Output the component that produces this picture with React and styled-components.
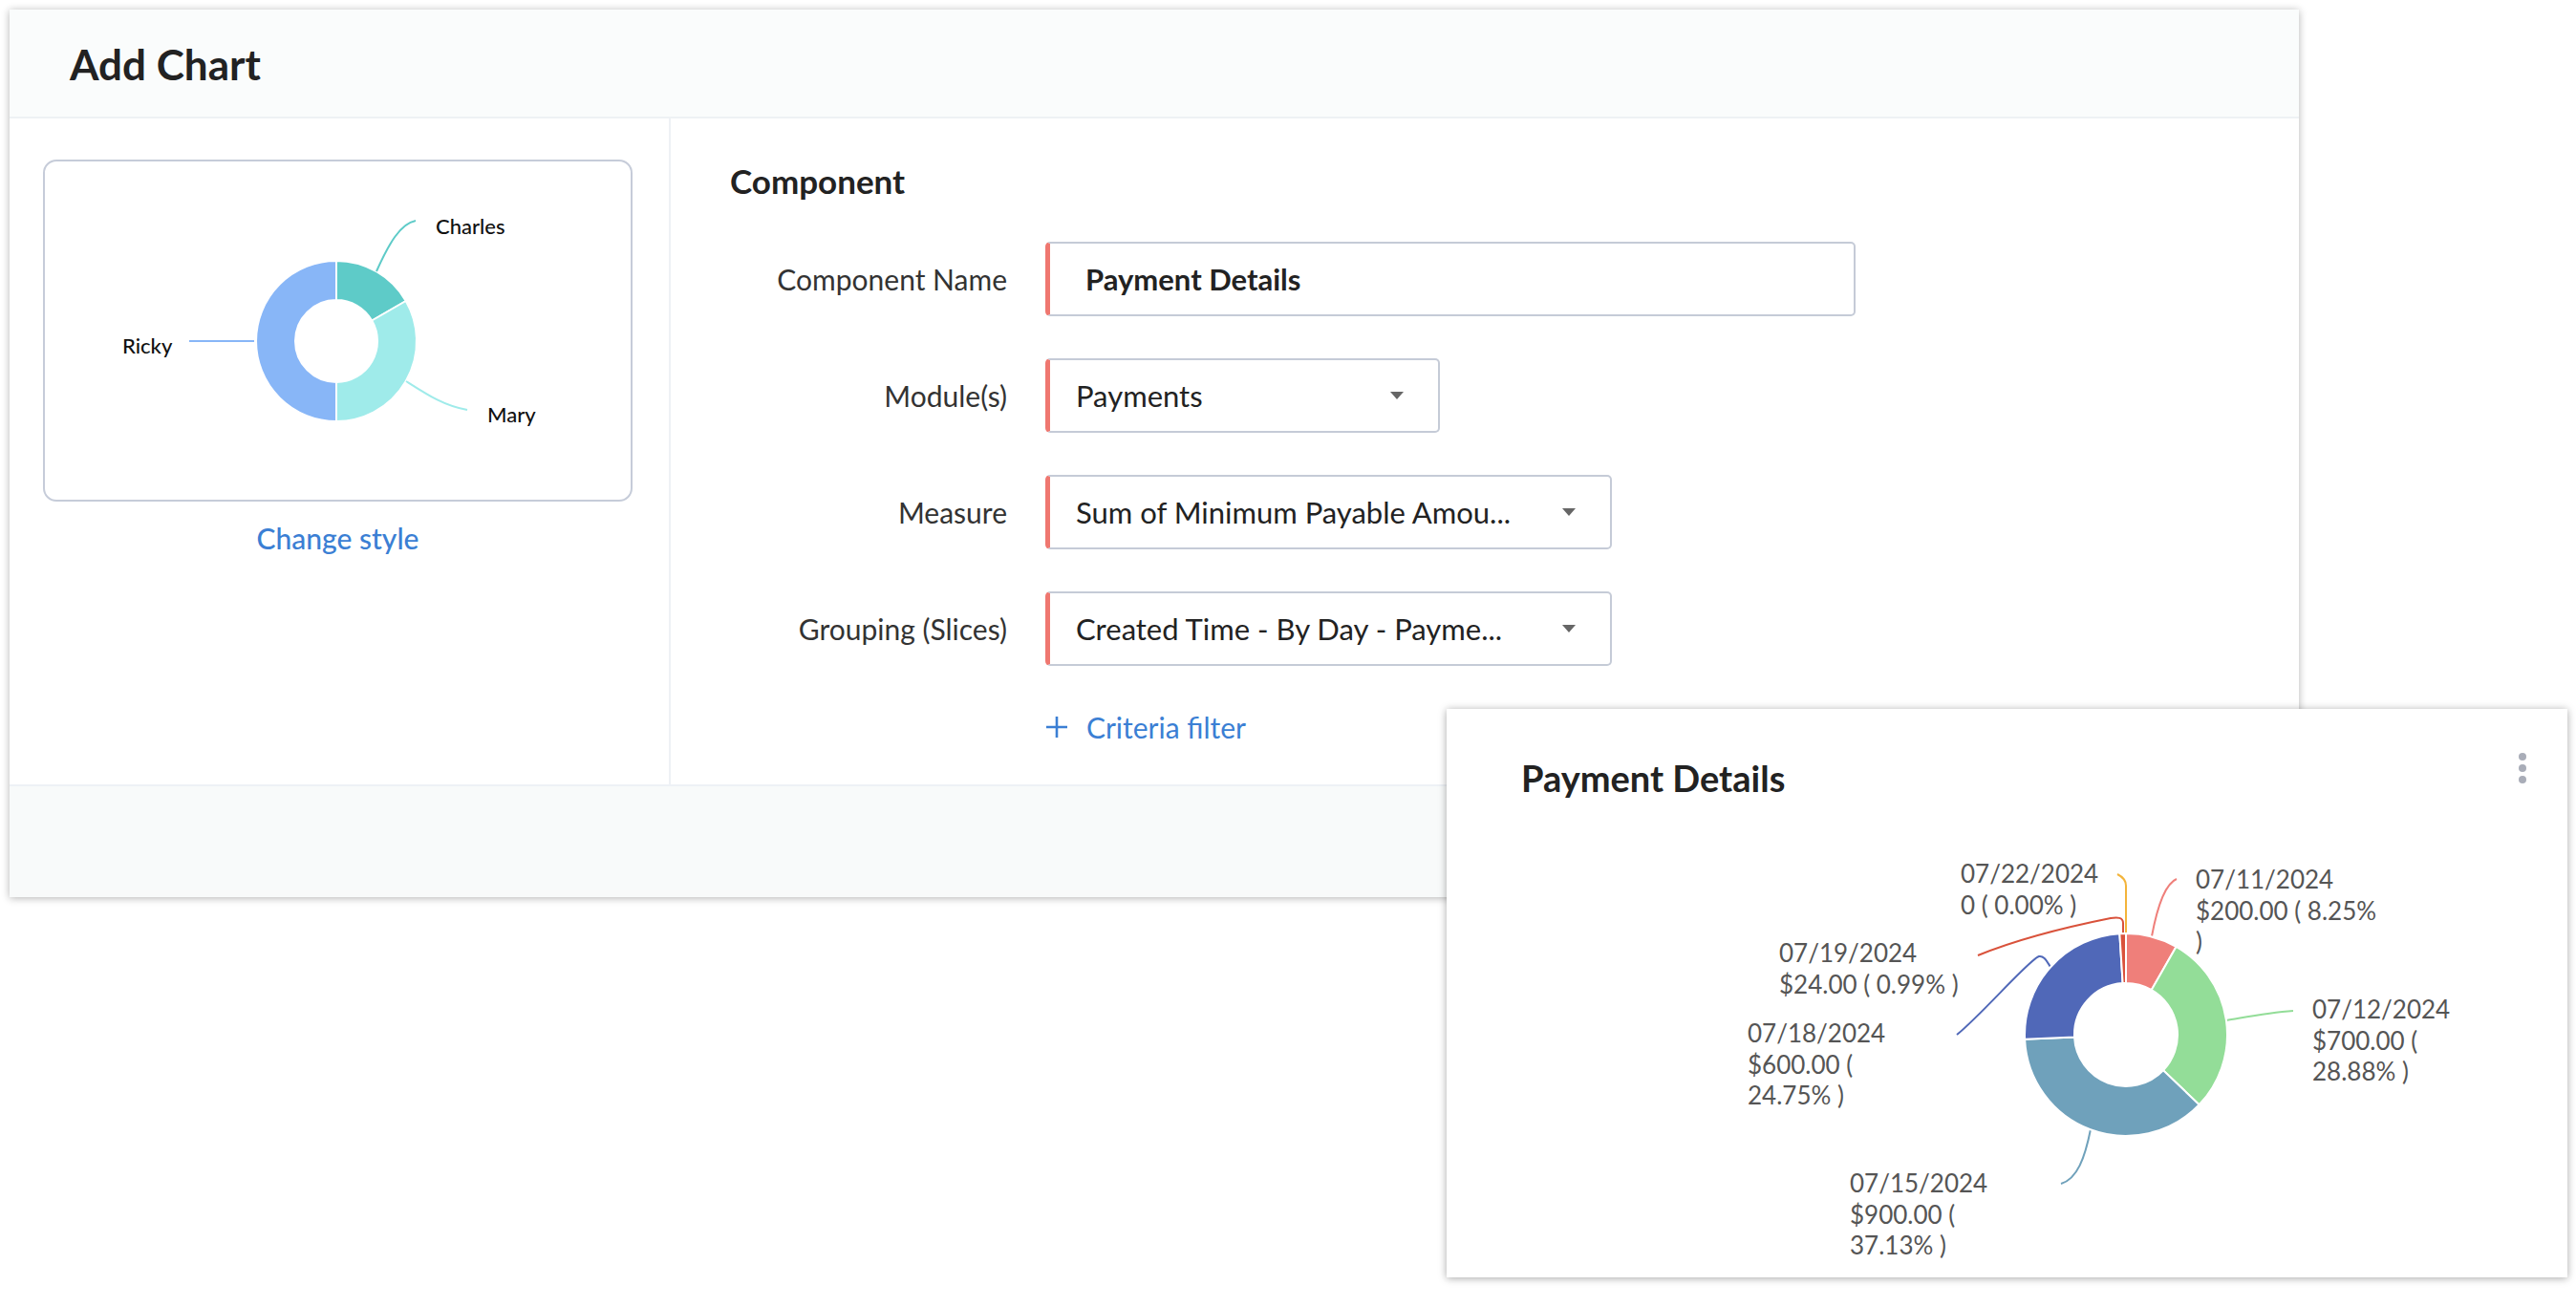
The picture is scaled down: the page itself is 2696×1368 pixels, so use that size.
import React from "react";
import styled, { createGlobalStyle } from "styled-components";

const GlobalStyle = createGlobalStyle`
  body {
    margin: 0;
    background: #ffffff;
    font-family: Lato, "Open Sans", sans-serif;
  }
`;

// angle in degrees, clockwise from 12 o'clock
const pt = (cx, cy, rad, deg) => {
  const a = (deg * Math.PI) / 180;
  return [cx + rad * Math.sin(a), cy - rad * Math.cos(a)];
};

const slicePath = (cx, cy, R, r, a0, a1) => {
  const large = a1 - a0 > 180 ? 1 : 0;
  const [x0, y0] = pt(cx, cy, R, a0);
  const [x1, y1] = pt(cx, cy, R, a1);
  const [x2, y2] = pt(cx, cy, r, a1);
  const [x3, y3] = pt(cx, cy, r, a0);
  return `M${x0} ${y0} A${R} ${R} 0 ${large} 1 ${x1} ${y1} L${x2} ${y2} A${r} ${r} 0 ${large} 0 ${x3} ${y3} Z`;
};

const previewSlices = [
  { name: "Charles", from: 0, to: 60, color: "#5ecbc8" },
  { name: "Mary", from: 60, to: 180, color: "#9febea" },
  { name: "Ricky", from: 180, to: 360, color: "#88b6f7" },
];

const previewLabels = [
  { text: "Charles", x: 411, y: 78, line: "M349 117 C362 88, 374 67, 390 64", color: "#5ecbc8" },
  { text: "Ricky", x: 83, y: 203, line: "M153 190 L221 190", color: "#88b6f7" },
  { text: "Mary", x: 465, y: 275, line: "M380 232 C402 246, 420 258, 444 262", color: "#9febea" },
];

const payments = [
  { from: 0, to: 29.7, color: "#ef7f7a" },
  { from: 29.7, to: 133.7, color: "#93dd98" },
  { from: 133.7, to: 267.4, color: "#6fa1bb" },
  { from: 267.4, to: 356.4, color: "#5068b8" },
  { from: 356.4, to: 360, color: "#d9523b" },
];

const paymentLabels = [
  { x: 538, y: 182, lines: ["07/22/2024", "0 ( 0.00% )"] },
  { x: 784, y: 188, lines: ["07/11/2024", "$200.00 ( 8.25%", ")"] },
  { x: 348, y: 265, lines: ["07/19/2024", "$24.00 ( 0.99% )"] },
  { x: 906, y: 324, lines: ["07/12/2024", "$700.00 (", "28.88% )"] },
  { x: 315, y: 349, lines: ["07/18/2024", "$600.00 (", "24.75% )"] },
  { x: 422, y: 506, lines: ["07/15/2024", "$900.00 (", "37.13% )"] },
];

const paymentLeaders = [
  { d: "M738 238 C744 206, 752 183, 764 178", color: "#ef7f7a" },
  { d: "M816 326 C840 322, 860 318, 886 316", color: "#93dd98" },
  { d: "M674 440 C668 470, 660 492, 643 497", color: "#6fa1bb" },
  { d: "M632 270 C628 264, 625 258, 620 259 C610 262, 560 320, 534 341", color: "#5068b8" },
  { d: "M708 235 L708 224 C708 218, 702 218, 695 219 C650 228, 600 240, 556 258", color: "#d9523b" },
  { d: "M711 235 L711 185 C711 178, 706 175, 702 173", color: "#f3b43b" },
];

const fields = [
  { label: "Component Name", value: "Payment Details", width: 848, input: true },
  { label: "Module(s)", value: "Payments", width: 413 },
  { label: "Measure", value: "Sum of Minimum Payable Amou...", width: 593 },
  { label: "Grouping (Slices)", value: "Created Time - By Day - Payme...", width: 593 },
];

const App = () => {
  return (
    <Page>
      <GlobalStyle />
      <Dialog>
        <Header>
          <Title>Add Chart</Title>
        </Header>
        <Body>
          <LeftCol>
            <PreviewBox>
              <svg width="100%" height="100%" viewBox="2 2 613 354">
                {previewSlices.map((s) => (
                  <path
                    key={s.name}
                    d={slicePath(307, 190, 84, 43, s.from, s.to)}
                    fill={s.color}
                    stroke="#fff"
                    strokeWidth="2"
                  />
                ))}
                {previewLabels.map((l) => (
                  <g key={l.text}>
                    <path d={l.line} fill="none" stroke={l.color} strokeWidth="2" />
                    <PreviewLabel x={l.x} y={l.y}>
                      {l.text}
                    </PreviewLabel>
                  </g>
                ))}
              </svg>
            </PreviewBox>
            <ChangeStyle>Change style</ChangeStyle>
          </LeftCol>
          <RightCol>
            <SectionTitle>Component</SectionTitle>
            <FormGrid>
              {fields.map((f) => (
                <React.Fragment key={f.label}>
                  <FieldLabel>{f.label}</FieldLabel>
                  <Field $width={f.width} $input={f.input}>
                    <FieldValue $bold={f.input}>{f.value}</FieldValue>
                    {!f.input && <Caret />}
                  </Field>
                </React.Fragment>
              ))}
              <CriteriaLink>
                <svg width="24" height="24" viewBox="0 0 24 24">
                  <path d="M12 1 V23 M1 12 H23" stroke="#3b7fd4" strokeWidth="2.6" fill="none" />
                </svg>
                Criteria filter
              </CriteriaLink>
            </FormGrid>
          </RightCol>
        </Body>
        <Footer />
      </Dialog>

      <ChartCard>
        <CardHeader>
          <CardTitle>Payment Details</CardTitle>
          <Kebab>
            <span />
            <span />
            <span />
          </Kebab>
        </CardHeader>
        <svg width="1173" height="475" viewBox="0 120 1173 475">
          {paymentLeaders.map((l, i) => (
            <path key={i} d={l.d} fill="none" stroke={l.color} strokeWidth="2" />
          ))}
          {payments.map((s, i) => (
            <path
              key={i}
              d={slicePath(711, 341, 106, 54, s.from, s.to)}
              fill={s.color}
              stroke="#fff"
              strokeWidth="2"
            />
          ))}
          {paymentLabels.map((l) => (
            <ChartLabel key={l.lines[0]} x={l.x} y={l.y}>
              {l.lines.map((t, i) => (
                <tspan key={i} x={l.x} dy={i === 0 ? 0 : 32.5}>
                  {t}
                </tspan>
              ))}
            </ChartLabel>
          ))}
        </svg>
      </ChartCard>
    </Page>
  );
};

const Page = styled.div`
  position: relative;
  width: 2696px;
  height: 1368px;
  padding: 10px 0 0 10px;
  box-sizing: border-box;
  overflow: hidden;
`;

const Dialog = styled.div`
  width: 2396px;
  height: 929px;
  display: flex;
  flex-direction: column;
  background: #ffffff;
  box-shadow: 0 1px 8px rgba(0, 0, 0, 0.3);
`;

const Header = styled.div`
  flex: 0 0 114px;
  box-sizing: border-box;
  display: flex;
  align-items: center;
  padding: 3px 0 0 63px;
  background: #fafcfc;
  border-bottom: 2px solid #eef2f4;
`;

const Title = styled.h1`
  margin: 0;
  font-size: 44px;
  font-weight: 700;
  line-height: 1.2;
  color: #222;
`;

const Body = styled.div`
  flex: 1;
  display: flex;
`;

const LeftCol = styled.div`
  width: 692px;
  box-sizing: border-box;
  border-right: 2px solid #eef1f5;
  padding: 43px 0 0 35px;
`;

const PreviewBox = styled.div`
  width: 617px;
  height: 358px;
  box-sizing: border-box;
  border: 2px solid #c6ccd9;
  border-radius: 14px;
  overflow: hidden;
`;

const PreviewLabel = styled.text`
  font-family: Lato, sans-serif;
  font-size: 22px;
  font-weight: 500;
  fill: #111;
`;

const ChangeStyle = styled.div`
  width: 617px;
  margin-top: 20px;
  text-align: center;
  font-size: 30px;
  font-weight: 500;
  line-height: 36px;
  color: #3b7fd4;
`;

const RightCol = styled.div`
  flex: 1;
  padding: 45px 0 0 62px;
`;

const SectionTitle = styled.h2`
  margin: 0;
  font-size: 35px;
  font-weight: 700;
  line-height: 40px;
  color: #222;
`;

const FormGrid = styled.div`
  margin-top: 44px;
  display: grid;
  grid-template-columns: 290px auto;
  grid-auto-rows: 78px;
  column-gap: 40px;
  row-gap: 44px;
  justify-content: start;
`;

const FieldLabel = styled.div`
  align-self: center;
  text-align: right;
  font-size: 30px;
  color: #333;
  white-space: nowrap;
`;

const Field = styled.div`
  width: ${(p) => p.$width}px;
  height: 78px;
  box-sizing: border-box;
  display: flex;
  align-items: center;
  justify-content: space-between;
  padding: 0 36px 0 ${(p) => (p.$input ? 37 : 27)}px;
  background: #ffffff;
  border: 2px solid #c5cbd7;
  border-left: 5px solid #ef7770;
  border-radius: 5px;
`;

const FieldValue = styled.span`
  font-size: 31px;
  font-weight: ${(p) => (p.$bold ? 700 : 400)};
  color: #222;
  white-space: nowrap;
`;

const Caret = styled.span`
  width: 0;
  height: 0;
  border-left: 7px solid transparent;
  border-right: 7px solid transparent;
  border-top: 8px solid #666;
`;

const CriteriaLink = styled.div`
  grid-column: 2;
  height: 40px;
  display: flex;
  align-items: center;
  gap: 19px;
  font-size: 30px;
  color: #3b7fd4;
`;

const Footer = styled.div`
  flex: 0 0 118px;
  box-sizing: border-box;
  background: #f8fafa;
  border-top: 2px solid #eef1f6;
`;

const ChartCard = styled.div`
  position: absolute;
  left: 1514px;
  top: 742px;
  width: 1173px;
  height: 595px;
  display: flex;
  flex-direction: column;
  background: #ffffff;
  box-shadow: 0 1px 8px rgba(0, 0, 0, 0.35);
`;

const CardHeader = styled.div`
  height: 120px;
  box-sizing: border-box;
  display: flex;
  justify-content: space-between;
  align-items: flex-start;
  padding: 46px 43px 0 78px;
`;

const CardTitle = styled.h3`
  margin: 0;
  font-size: 38px;
  font-weight: 700;
  line-height: 52px;
  color: #222;
`;

const Kebab = styled.div`
  display: flex;
  flex-direction: column;
  gap: 4px;
  span {
    width: 8px;
    height: 8px;
    border-radius: 50%;
    background: #a9adb8;
  }
`;

const ChartLabel = styled.text`
  font-family: Lato, sans-serif;
  font-size: 26px;
  fill: #555;
`;

export default App;
